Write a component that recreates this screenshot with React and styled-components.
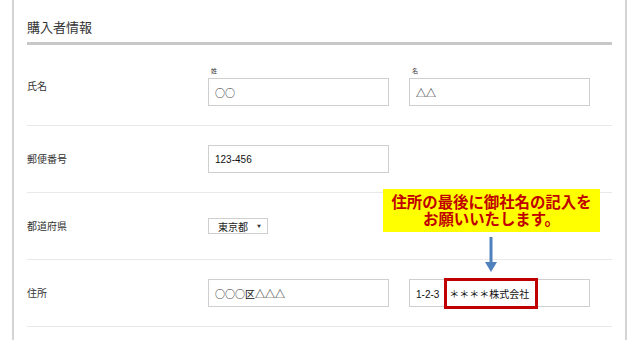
import styled, { createGlobalStyle } from 'styled-components'

const GlobalStyle = createGlobalStyle`
   html, body {
      margin: 0;
      background: #fff;
   }
   body {
      font-family: 'Noto Sans CJK JP', 'Liberation Sans', sans-serif;
      color: #333;
   }
`

const rows = [
   {
      label: '氏名',
      fields: [
         { caption: '姓', value: '○○', cjk: true },
         { caption: '名', value: '△△', cjk: true },
      ],
   },
   { label: '郵便番号', fields: [{ value: '123-456' }] },
   { label: '都道府県', select: '東京都' },
   {
      label: '住所',
      fields: [{ value: '○○○区△△△', cjk: true }, { value: '1-2-3　＊＊＊＊株式会社', note: true }],
   },
]

const App = () => {
   return (
      <Page>
         <GlobalStyle />
         <Panel>
            <Heading>購入者情報</Heading>
            {rows.map((row) => (
               <Row key={row.label}>
                  <Label>{row.label}</Label>
                  <Fields>
                     {row.select && (
                        <Select>
                           <span>{row.select}</span>
                           <Caret>▼</Caret>
                        </Select>
                     )}
                     {row.fields?.map((f, i) => (
                        <Field key={i}>
                           {f.caption && <Caption>{f.caption}</Caption>}
                           <Input readOnly value={f.value} $cjk={f.cjk} />
                           {f.note && (
                              <>
                                 <Callout>
                                    住所の最後に御社名の記入を
                                    <br />
                                    お願いいたします。
                                 </Callout>
                                 <Arrow width='14' height='36' viewBox='0 0 14 36'>
                                    <rect x='5.5' y='0' width='3' height='27' fill='#4f81bd' />
                                    <path d='M1 25 L13 25 L7 35 Z' fill='#4f81bd' />
                                 </Arrow>
                                 <Highlight />
                              </>
                           )}
                        </Field>
                     ))}
                  </Fields>
               </Row>
            ))}
         </Panel>
      </Page>
   )
}

export default App

const Page = styled.div`
   width: 640px;
   height: 340px;
   padding: 0 13px 0 12px;
   box-sizing: border-box;
   overflow: hidden;
`

const Panel = styled.section`
   border-left: 2px solid #d4d4d4;
   border-right: 2px solid #d4d4d4;
   padding: 19px 13px 0 13px;
   min-height: 340px;
   box-sizing: border-box;
`

const Heading = styled.h2`
   margin: 0;
   font-size: 13px;
   font-weight: 400;
   line-height: 16px;
   color: #333;
   padding-bottom: 7px;
   border-bottom: 3px solid #c8c8c8;
`

const Row = styled.div`
   display: grid;
   grid-template-columns: 181px 1fr;
   align-items: center;
   min-height: 28px;
   padding: 19px 0;
   border-bottom: 1px solid #e8e8e8;
   &:first-of-type {
      padding-top: 21px;
   }
`

const Label = styled.div`
   font-size: 10px;
   line-height: 14px;
   color: #333;
`

const Fields = styled.div`
   display: flex;
   align-items: flex-end;
   gap: 20px;
`

const Field = styled.div`
   position: relative;
   display: flex;
   flex-direction: column;
   width: 181px;
`

const Caption = styled.div`
   font-size: 6px;
   line-height: 10px;
   margin-bottom: 2px;
   padding-left: 3px;
   color: #333;
`

const Input = styled.input`
   box-sizing: border-box;
   width: 100%;
   height: 28px;
   border: 1px solid #cfcfcf;
   border-radius: 0;
   padding: 0 6px;
   margin: 0;
   font-family: ${(p) =>
      p.$cjk ? "'Noto Sans CJK JP', sans-serif" : "'Liberation Sans', 'Noto Sans CJK JP', sans-serif"};
   font-size: 10px;
   color: #111;
   background: #fff;
   outline: none;
`

const Select = styled.div`
   display: flex;
   align-items: center;
   justify-content: space-between;
   box-sizing: border-box;
   width: 60px;
   height: 16px;
   padding: 0 6px 0 9px;
   border: 1px solid #cfcfcf;
   font-size: 10px;
   color: #222;
`

const Caret = styled.span`
   font-size: 4px;
   color: #333;
`

const Callout = styled.div`
   position: absolute;
   left: -26px;
   top: -90px;
   width: 217px;
   height: 43px;
   background: #ffff00;
   color: #c00000;
   font-size: 15.4px;
   font-weight: 700;
   line-height: 17px;
   text-align: center;
   padding-top: 4px;
   box-sizing: border-box;
   white-space: nowrap;
`

const Arrow = styled.svg`
   position: absolute;
   left: 75px;
   top: -42px;
`

const Highlight = styled.div`
   position: absolute;
   left: 35px;
   top: -1px;
   width: 94px;
   height: 31px;
   border: 3px solid #c00000;
   box-sizing: border-box;
`
